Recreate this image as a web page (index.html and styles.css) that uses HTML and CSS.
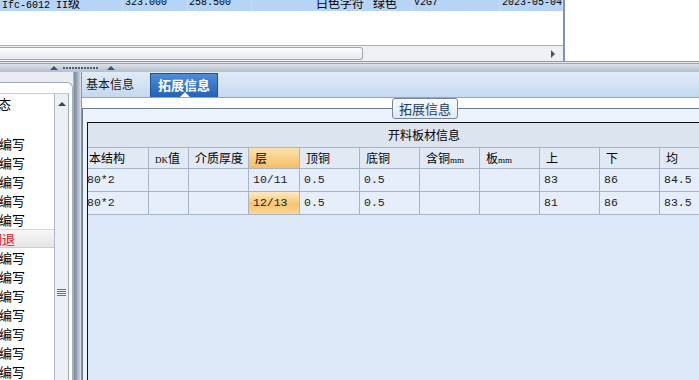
FILE: index.html
```html
<!doctype html>
<html lang="zh-CN">
<head>
    <meta charset="UTF-8">
    <title>拓展信息</title>
    <link rel="stylesheet" href="styles.css">
</head>
<body>
<div class="top">
    <div class="gv">
        <div class="gv-row">
            <span class="c1">Ifc-6012 II<b class="cn">级</b></span>
            <span class="c2">323.000</span>
            <span class="c3">258.500</span>
            <span class="c4 cn">白色字符</span>
            <span class="c5 cn">绿色</span>
            <span class="c6">V2G7</span>
            <span class="c7">2023-05-04</span>
        </div>
        <div class="gv-fill"></div>
        <div class="hscroll">
            <div class="thumb"></div>
            <div class="arr-r"></div>
        </div>
    </div>
    <div class="top-side"></div>
</div>

<div class="hsplit">
    <div class="tri-up"></div>
    <div class="dots"></div>
    <div class="tri-up second"></div>
</div>

<div class="bottom">
    <div class="left">
        <div class="lbox">
            <div class="list">
                <div class="lh"><span class="cut">状态</span></div>
                <div class="li"></div>
                <div class="li"><span class="cut">待编写</span></div>
                <div class="li"><span class="cut">待编写</span></div>
                <div class="li"><span class="cut">待编写</span></div>
                <div class="li"><span class="cut">待编写</span></div>
                <div class="li"><span class="cut">待编写</span></div>
                <div class="li sel"><span class="cut2">回退</span></div>
                <div class="li"><span class="cut">待编写</span></div>
                <div class="li"><span class="cut">待编写</span></div>
                <div class="li"><span class="cut">待编写</span></div>
                <div class="li"><span class="cut">待编写</span></div>
                <div class="li"><span class="cut">待编写</span></div>
                <div class="li"><span class="cut">待编写</span></div>
                <div class="li"><span class="cut">待编写</span></div>
            </div>
            <div class="vscroll">
                <div class="vs-btn"><div class="tri-up"></div></div>
                <div class="vs-thumb"><div class="grip"></div></div>
            </div>
        </div>
    </div>
    <div class="vsplit"></div>
    <div class="right">
        <div class="tabs">
            <div class="tab">基本信息</div>
            <div class="tab on">拓展信息</div>
        </div>
        <fieldset class="group">
            <legend>拓展信息</legend>
            <div class="grid">
                <div class="band">开料板材信息</div>
                <div class="tbl">
                    <div class="th first">本结构</div>
                    <div class="th"><span class="sm">DK</span>值</div>
                    <div class="th">介质厚度</div>
                    <div class="th hl">层</div>
                    <div class="th">顶铜</div>
                    <div class="th">底铜</div>
                    <div class="th">含铜<span class="sm">mm</span></div>
                    <div class="th">板<span class="sm">mm</span></div>
                    <div class="th">上</div>
                    <div class="th">下</div>
                    <div class="th">均</div>
                    <div class="th"></div>

                    <div class="td first">80*2</div>
                    <div class="td"></div>
                    <div class="td"></div>
                    <div class="td">10/11</div>
                    <div class="td">0.5</div>
                    <div class="td">0.5</div>
                    <div class="td"></div>
                    <div class="td"></div>
                    <div class="td">83</div>
                    <div class="td">86</div>
                    <div class="td">84.5</div>
                    <div class="td"></div>

                    <div class="td first">80*2</div>
                    <div class="td"></div>
                    <div class="td"></div>
                    <div class="td cur">12/13</div>
                    <div class="td">0.5</div>
                    <div class="td">0.5</div>
                    <div class="td"></div>
                    <div class="td"></div>
                    <div class="td">81</div>
                    <div class="td">86</div>
                    <div class="td">83.5</div>
                    <div class="td"></div>
                </div>
            </div>
        </fieldset>
    </div>
</div>
</body>
</html>
```

FILE: styles.css
```css
*{
    margin: 0;
    padding: 0;
    box-sizing: border-box;
}
body{
    width: 699px;
    height: 380px;
    overflow: hidden;
    background: #fff;
    color: #000;
    font-family: "Noto Sans CJK SC", "Liberation Sans", sans-serif;
    font-size: 12px;
}

/* top grid (scrolled) */
.top{
    display: flex;
    height: 61px;
}
.gv{
    width: 565px;
    border-right: 2px solid #8193ab;
    display: flex;
    flex-direction: column;
}
.gv-row{
    height: 11px;
    background: #b6d4f6;
    display: flex;
    overflow: hidden;
    font-family: "Liberation Mono", "Noto Sans CJK SC", monospace;
    font-size: 10px;
    line-height: 12px;
}
.gv-row span{
    margin-top: -3px;
    white-space: nowrap;
    overflow: hidden;
    border-right: 1px solid #c8dcf5;
}
.gv-row .cn{
    font-family: "Noto Sans CJK SC", sans-serif;
    font-size: 12px;
    font-weight: normal;
}
.c1{ width: 123px; padding-left: 2px; }
.c2{ width: 65px; padding-left: 2px; }
.c3{ width: 64px; padding-left: 1px; }
.c4{ width: 120px; padding-left: 64px; }
.c5{ width: 41px; padding-left: 1px; }
.c6{ width: 87px; padding-left: 1px; }
.c7{ width: 63px; padding-left: 2px; }
.gv-fill{
    flex: 1;
}
.hscroll{
    height: 16px;
    border-top: 1px solid #a6afbc;
    background: #eef0f4;
    display: flex;
    align-items: center;
    justify-content: space-between;
    padding-right: 8px;
}
.thumb{
    width: 363px;
    height: 13px;
    border: 1px solid #9ba6b6;
    border-left: none;
    border-radius: 0 3px 3px 0;
    background: linear-gradient(#fbfcfd, #e5e9ef);
}
.arr-r{
    border-left: 4px solid #4d525a;
    border-top: 4px solid transparent;
    border-bottom: 4px solid transparent;
}
.top-side{
    flex: 1;
}

/* horizontal splitter */
.hsplit{
    height: 11px;
    border-top: 1px solid #8e98a6;
    background: linear-gradient(#e6e9ee 0, #e6e9ee 1px, #9ba5b3 1px, #9ba5b3 2px, #dde2e8 2px, #b3bfcf 100%);
    display: flex;
    align-items: flex-end;
    padding: 0 0 2px 50px;
}
.tri-up{
    border-bottom: 4px solid #3b5372;
    border-left: 4px solid transparent;
    border-right: 4px solid transparent;
}
.hsplit .dots{
    width: 35px;
    height: 2px;
    margin: 0 9px 1px 5px;
    background: repeating-linear-gradient(to right, #4a5b74 0, #4a5b74 2px, transparent 2px, transparent 3px);
}

/* bottom area */
.bottom{
    display: flex;
    height: 308px;
    overflow: hidden;
}
.left{
    width: 73px;
    background: #e9edf3;
    padding-top: 10px;
}
.lbox{
    height: 100%;
    background: #fff;
    border-top: 1px solid #a3abb7;
    border-right: 1px solid #a3abb7;
    border-top-right-radius: 6px;
    padding: 10px 3px 0 0;
    display: flex;
}
.list{
    flex: 1;
    overflow: hidden;
    border-top: 1px solid #c4cbd5;
    font-size: 13px;
    white-space: nowrap;
}
.lh{
    height: 21px;
    line-height: 20px;
}
.li{
    height: 19px;
    line-height: 19px;
}
.li.sel{
    background: linear-gradient(#f7f7f7, #e5e5e5);
    border-top: 1px solid #d8d8d8;
    border-bottom: 1px solid #cdcdcd;
    line-height: 17px;
    color: #e3141c;
}
.cut{
    margin-left: -14px;
}
.lh .cut{
    margin-left: -15px;
}
.cut2{
    margin-left: -11px;
}
.vscroll{
    width: 15px;
    border-top: 1px solid #c4cbd5;
    border-left: 1px solid #aeb6c1;
    border-right: 1px solid #a2abb8;
    background: #eceff3;
}
.vs-btn{
    height: 20px;
    display: flex;
    align-items: center;
    justify-content: center;
}
.vs-btn .tri-up{
    border-bottom-color: #34455c;
}
.vs-thumb{
    height: 356px;
    display: flex;
    align-items: center;
    justify-content: center;
}
.grip{
    width: 9px;
    height: 7px;
    background: repeating-linear-gradient(#6a7484 0, #6a7484 1px, transparent 1px, transparent 2px);
}
.vsplit{
    width: 9px;
    background: linear-gradient(to right, #d9dee5 0, #7d8ba0 1px, #8d9aae 3px, #b9c3d0 6px, #dfe4ea 8px, #8a97aa 8px);
}

/* right panel */
.right{
    flex: 1;
    min-width: 0;
    display: flex;
    flex-direction: column;
    background: #fff;
}
.tabs{
    height: 26px;
    border-bottom: 1px solid #91a7c4;
    background: linear-gradient(#e2ebf7, #c6d8ef);
    display: flex;
    align-items: flex-end;
}
.tab{
    height: 25px;
    line-height: 24px;
    padding: 0 4px;
    color: #1b1b1b;
}
.tab.on{
    position: relative;
    margin-left: 12px;
    width: 68px;
    height: 24px;
    padding: 0;
    line-height: 22px;
    text-align: center;
    font-size: 13px;
    font-weight: bold;
    color: #fff;
    background: linear-gradient(#4f8cd8, #2462b6);
    border: 1px solid #1f5197;
    border-bottom: none;
}
.tab.on::after{
    content: "";
    position: absolute;
    left: 29px;
    bottom: 0;
    border-bottom: 5px solid #fff;
    border-left: 5px solid transparent;
    border-right: 5px solid transparent;
}
.group{
    flex: 1;
    min-width: 0;
    border: 1px solid #6d7a8e;
    border-right: none;
    border-bottom: none;
    background: #edf3fc;
    padding: 3px 0 0 4px;
    overflow: hidden;
}
.group legend{
    margin-left: 305px;
    height: 21px;
    padding: 0 6px;
    line-height: 19px;
    font-size: 13px;
    color: #233c66;
    border: 1px solid #76859b;
    border-radius: 3px;
    background: linear-gradient(#f6f9fd, #e1eaf6);
}
.grid{
    width: 673px;
    height: 300px;
    border-top: 1px solid #111;
    border-left: 1px solid #111;
    background: #dce8f8;
}
.band{
    height: 25px;
    line-height: 24px;
    text-align: center;
    background: #dce4ef;
    border-bottom: 1px solid #a8b5c8;
}
.tbl{
    display: grid;
    grid-template-columns: 61px 40px 60px 51px 60px 60px 60px 60px 60px 60px 60px 40px;
}
.tbl div{
    border-right: 1px solid #a8b5c8;
    border-bottom: 1px solid #a8b5c8;
    white-space: nowrap;
    overflow: hidden;
}
.th{
    height: 21px;
    line-height: 20px;
    padding-left: 6px;
    background: #e1e9f5;
}
.th.first{
    padding-left: 1px;
}
.sm{
    font-family: "Liberation Serif", serif;
    font-size: 9px;
}
.td{
    height: 23px;
    line-height: 22px;
    padding-left: 4px;
    background: #e5eefa;
    color: #1a1a1a;
    font-family: "Liberation Mono", monospace;
    font-size: 11.5px;
}
.td.first{
    padding-left: 0;
    text-indent: -1px;
}
.th.hl{
    background: linear-gradient(#fbe2ae, #f5bf68);
}
.td.cur{
    background: linear-gradient(#fdeac3 0%, #f8c570 55%, #fbd592 100%);
}
```
